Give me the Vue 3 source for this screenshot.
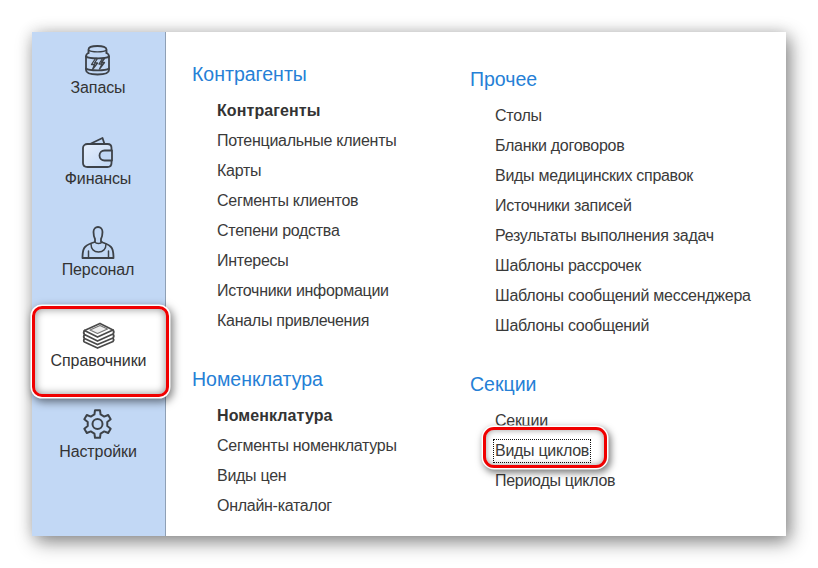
<script setup>
const nav = [
  { label: 'Запасы', icon: 'jar' },
  { label: 'Финансы', icon: 'wallet' },
  { label: 'Персонал', icon: 'person' },
  { label: 'Справочники', icon: 'stack', active: true },
  { label: 'Настройки', icon: 'gear' },
]
const col1 = [
  { title: 'Контрагенты', items: ['Контрагенты', 'Потенциальные клиенты', 'Карты', 'Сегменты клиентов', 'Степени родства', 'Интересы', 'Источники информации', 'Каналы привлечения'] },
  { title: 'Номенклатура', items: ['Номенклатура', 'Сегменты номенклатуры', 'Виды цен', 'Онлайн-каталог'] },
]
const col2 = [
  { title: 'Прочее', items: ['Столы', 'Бланки договоров', 'Виды медицинских справок', 'Источники записей', 'Результаты выполнения задач', 'Шаблоны рассрочек', 'Шаблоны сообщений мессенджера', 'Шаблоны сообщений'] },
  { title: 'Секции', items: ['Секции', 'Виды циклов', 'Периоды циклов'] },
]
function gear(cx, cy, ro, ri, n) {
  const pts = []
  const step = (Math.PI * 2) / n
  for (let i = 0; i < n; i++) {
    const a = -Math.PI / 2 + i * step
    const outer = step * 0.17
    const inner = step * 0.3
    const p = (r, t) => `${(cx + r * Math.cos(t)).toFixed(2)} ${(cy + r * Math.sin(t)).toFixed(2)}`
    pts.push(p(ri, a - inner), p(ro, a - outer), p(ro, a + outer), p(ri, a + inner))
  }
  return 'M' + pts.join('L') + 'Z'
}
const gearPath = gear(15.5, 17, 14, 10, 6)
</script>

<template>
  <div class="page">
    <div class="card">
      <aside class="side">
        <div v-for="n in nav" :key="n.label" class="nav" :class="{ active: n.active }">
          <svg class="ico" viewBox="0 0 32 32" fill="none" stroke="#3d4248" stroke-width="1.8" stroke-linejoin="round" stroke-linecap="round">
            <template v-if="n.icon === 'jar'">
              <path d="M6.500 10V6.500c0-2.500 3.500-3.500 9-3.500s9 1 9 3.500V10" />
              <path d="M6.500 7c2.500 2.500 15.500 2.500 18 0" stroke-width="1.200" />
              <path d="M6.500 10C5 10.500 4 12 4 14v13c0 3 4 4.500 11.500 4.500S27 30 27 27V14c0-2-1-3.500-2.500-4" />
              <path d="M4 13.500c3 2.500 20 2.500 23 0M4 25.500c3 2.500 20 2.500 23 0" />
              <path d="M13.500 15.500l-4 6h3l-2 5 5-6.500h-3l3-4.500zM20.500 15.500l-3.500 5.500h3l-2.500 5 5-6.500h-3l3-4z" stroke-width="1.300" />
            </template>
            <template v-else-if="n.icon === 'wallet'">
              <defs>
                <linearGradient id="wfill" x1="0" y1="0" x2="1" y2="1">
                  <stop offset="0" stop-color="#e6effc" />
                  <stop offset="1" stop-color="#c2d8f5" />
                </linearGradient>
              </defs>
              <path d="M8 10l12.500-6 2 6" />
              <path d="M29.500 16v-2c0-2.500-1.500-4-4-4H5.500c-2.500 0-4.500 1.500-4.500 4v15c0 2.500 2 4 4.500 4h20c2.500 0 4-1.500 4-4v-2" fill="url(#wfill)" />
              <path d="M30 16.500h-7.500a5 5 0 0 0 0 10H30z" fill="#c2d8f5" />
            </template>
            <template v-else-if="n.icon === 'person'">
              <path d="M.5 33c0-6 .5-9 2.500-11 2-2 6-4 10-5v-3c-1-2-1.500-4-1.500-7 0-3 2-5 4.500-5s4.500 2 4.500 5c0 3-.5 5-1.500 7v3c4 1 8 3 10 5 2 2 2.500 5 2.500 11z" />
              <path d="M9 19c0 5 3 8 7.500 8s7.500-3 7.500-8M13 17c1 2 6 2 7 0M6.500 33v-7M26.500 33v-7" stroke-width="1.500" />
            </template>
            <template v-else-if="n.icon === 'stack'">
              <path d="M1.500 14.500L17 7.500l13 6.500-15.500 7z" stroke="#4a4a4a" fill="#fff" />
              <path d="M7 14l10-4.500 7.500 3.500-10 4.500z" stroke="#777" stroke-width="1.300" fill="#eee" />
              <path d="M1.500 14.500c-1 1.500-1 3 0 4l13 6.500L30 18c.8-1 .8-3 0-4M1.500 18.500c-1 1.500-1 3 0 4l13 6L30 22c.8-1 .8-3 0-4M1.500 22.500c-1 1.500-1 3 0 3.500l13 6L30 25.500c.8-1 .8-2.500 0-3.500" stroke="#4a4a4a" />
            </template>
            <template v-else>
              <path :d="gearPath" stroke-width="2" />
              <circle cx="15.500" cy="17" r="5" stroke-width="2" />
            </template>
          </svg>
          <div class="nav-label">{{ n.label }}</div>
        </div>
      </aside>
      <main class="main">
        <div class="col col1">
          <section v-for="s in col1" :key="s.title" class="sec">
            <h2>{{ s.title }}</h2>
            <a v-for="(it, i) in s.items" :key="it" class="link" :class="{ strong: i === 0 }">{{ it }}</a>
          </section>
        </div>
        <div class="col col2">
          <section v-for="s in col2" :key="s.title" class="sec">
            <h2>{{ s.title }}</h2>
            <a v-for="it in s.items" :key="it" class="link"><span :class="{ focus: it === 'Виды циклов' }">{{ it }}</span></a>
          </section>
          <div class="mark" />
        </div>
      </main>
    </div>
  </div>
</template>

<style>
html, body { margin: 0; background: #fff; }
</style>

<style scoped>
.page {
  width: 818px;
  height: 568px;
  padding: 32px;
  box-sizing: border-box;
  overflow: hidden;
  font-family: "Liberation Sans", Arial, sans-serif;
}
.card {
  width: 754px;
  height: 504px;
  display: flex;
  background: #fff;
  box-shadow: 4px 6px 18px rgba(0, 0, 0, .45), 0 0 14px rgba(0, 0, 0, .12);
}
.side {
  width: 134px;
  flex: none;
  background: #c2d8f5;
  border-right: 1px solid #8fa0b5;
  display: flex;
  flex-direction: column;
  box-sizing: border-box;
}
.nav {
  position: relative;
  height: 91px;
  display: flex;
  flex-direction: column;
  align-items: center;
  padding: 11px 1px 0 0;
  box-sizing: border-box;
}
.nav.active {
  background: #fff;
  width: 137px;
  z-index: 2;
  border: 3.500px solid #f00000;
  border-radius: 10px;
  margin: 1px 0 -1px 0;
  padding: 6.500px 0 0 0;
  height: 91px;
  box-shadow: 0 0 0 1.500px #fff, 2px 3px 8px 2px rgba(0, 0, 0, .5), inset 0 0 8px rgba(0, 0, 0, .45);
}
.nav.active .nav-label { margin-right: 4px; }
.nav.active .ico { margin-right: 4px; }
.ico { width: 32px; height: 32px; display: block; overflow: visible; }
.nav-label {
  margin-top: 3px;
  font-size: 16px;
  letter-spacing: -.1px;
  line-height: 20px;
  color: #333;
}
.main { flex: 1; display: flex; min-width: 0; }
.col { position: relative; }
.col1 { width: 304px; padding: 27px 0 0 26px; box-sizing: border-box; flex: none; }
.col2 { padding-top: 32px; }
.sec { margin-bottom: 28px; }
h2 {
  margin: 0 0 7px;
  font-size: 19.500px;
  line-height: 30px;
  font-weight: 400;
  color: #2580d6;
  height: 30px;
}
.link {
  display: block;
  margin-left: 25px;
  height: 30px;
  line-height: 29px;
  font-size: 16px;
  letter-spacing: -.28px;
  color: #3a3a3a;
  white-space: nowrap;
}
.strong { font-weight: 700; color: #333; letter-spacing: .1px; }
.focus {
  display: inline-block;
  line-height: 22px;
  outline: 1px dotted #111;
  outline-offset: 0;
  padding: 0 1px;
  margin-left: -1px;
}
.mark {
  position: absolute;
  left: 13px;
  top: 395px;
  width: 124px;
  height: 41px;
  box-sizing: border-box;
  border: 3.500px solid #f00000;
  border-radius: 11px;
  box-shadow: 0 0 0 1.500px #fff, 2px 3px 7px 2px rgba(0, 0, 0, .5), inset 0 0 6px rgba(0, 0, 0, .4);
  pointer-events: none;
}
</style>
